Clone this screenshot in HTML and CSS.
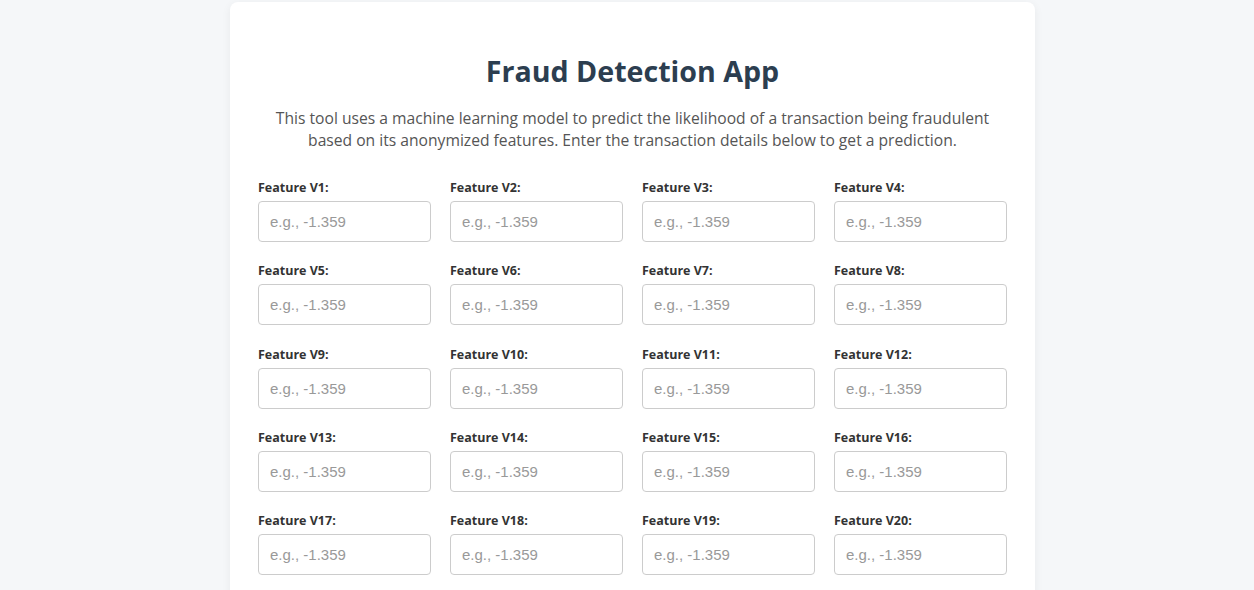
FILE: index.html
```html
<!DOCTYPE html>
<html lang="en">
<head>
<meta charset="utf-8">
<title>Fraud Detection App</title>
<link rel="stylesheet" href="styles.css">
</head>
<body>
<main class="card">
  <h1 class="title">Fraud Detection App</h1>
  <p class="intro">This tool uses a machine learning model to predict the likelihood of a transaction being fraudulent based on its anonymized features. Enter the transaction details below to get a prediction.</p>
  <form class="grid">
    <div class="field"><label>Feature V1:</label><input type="text" placeholder="e.g., -1.359"></div>
    <div class="field"><label>Feature V2:</label><input type="text" placeholder="e.g., -1.359"></div>
    <div class="field"><label>Feature V3:</label><input type="text" placeholder="e.g., -1.359"></div>
    <div class="field"><label>Feature V4:</label><input type="text" placeholder="e.g., -1.359"></div>
    <div class="field"><label>Feature V5:</label><input type="text" placeholder="e.g., -1.359"></div>
    <div class="field"><label>Feature V6:</label><input type="text" placeholder="e.g., -1.359"></div>
    <div class="field"><label>Feature V7:</label><input type="text" placeholder="e.g., -1.359"></div>
    <div class="field"><label>Feature V8:</label><input type="text" placeholder="e.g., -1.359"></div>
    <div class="field"><label>Feature V9:</label><input type="text" placeholder="e.g., -1.359"></div>
    <div class="field"><label>Feature V10:</label><input type="text" placeholder="e.g., -1.359"></div>
    <div class="field"><label>Feature V11:</label><input type="text" placeholder="e.g., -1.359"></div>
    <div class="field"><label>Feature V12:</label><input type="text" placeholder="e.g., -1.359"></div>
    <div class="field"><label>Feature V13:</label><input type="text" placeholder="e.g., -1.359"></div>
    <div class="field"><label>Feature V14:</label><input type="text" placeholder="e.g., -1.359"></div>
    <div class="field"><label>Feature V15:</label><input type="text" placeholder="e.g., -1.359"></div>
    <div class="field"><label>Feature V16:</label><input type="text" placeholder="e.g., -1.359"></div>
    <div class="field"><label>Feature V17:</label><input type="text" placeholder="e.g., -1.359"></div>
    <div class="field"><label>Feature V18:</label><input type="text" placeholder="e.g., -1.359"></div>
    <div class="field"><label>Feature V19:</label><input type="text" placeholder="e.g., -1.359"></div>
    <div class="field"><label>Feature V20:</label><input type="text" placeholder="e.g., -1.359"></div>
  </form>
</main>
</body>
</html>
```
FILE: styles.css
```css
html, body {
  margin: 0;
  padding: 0;
}
body {
  background: #f5f7f9;
  font-family: "Open Sans", "Noto Sans", sans-serif;
  color: #333;
  padding-top: 2px;
}
.card {
  width: 805px;
  box-sizing: border-box;
  margin-left: 230px;
  background: #fff;
  border-radius: 8px;
  box-shadow: 0 2px 10px rgba(0,0,0,0.06);
  padding: 37px 28px 40px;
  min-height: 700px;
}
.title {
  margin: 0;
  text-align: center;
  font-size: 28.6px;
  font-weight: 700;
  color: #2c3e50;
  line-height: 64px;
}
.intro {
  margin: 4px 0 0;
  text-align: center;
  font-size: 15.65px;
  line-height: 22px;
  color: #555;
}
.grid {
  display: grid;
  grid-template-columns: repeat(4, 173px);
  column-gap: 19px;
  row-gap: 21.25px;
  margin-top: 29px;
}
.field {
  display: flex;
  flex-direction: column;
}
.field label {
  font-size: 12.5px;
  font-weight: 700;
  color: #333;
  line-height: 16px;
  margin-bottom: 5px;
}
.field input {
  box-sizing: border-box;
  width: 173px;
  height: 41px;
  border: 1px solid #ccc;
  border-radius: 4px;
  padding: 0 11px;
  font-family: "Liberation Sans", Arial, sans-serif;
  font-size: 15px;
  color: #333;
  background: #fff;
  outline: none;
}
.field input::placeholder {
  color: #999;
}
```
